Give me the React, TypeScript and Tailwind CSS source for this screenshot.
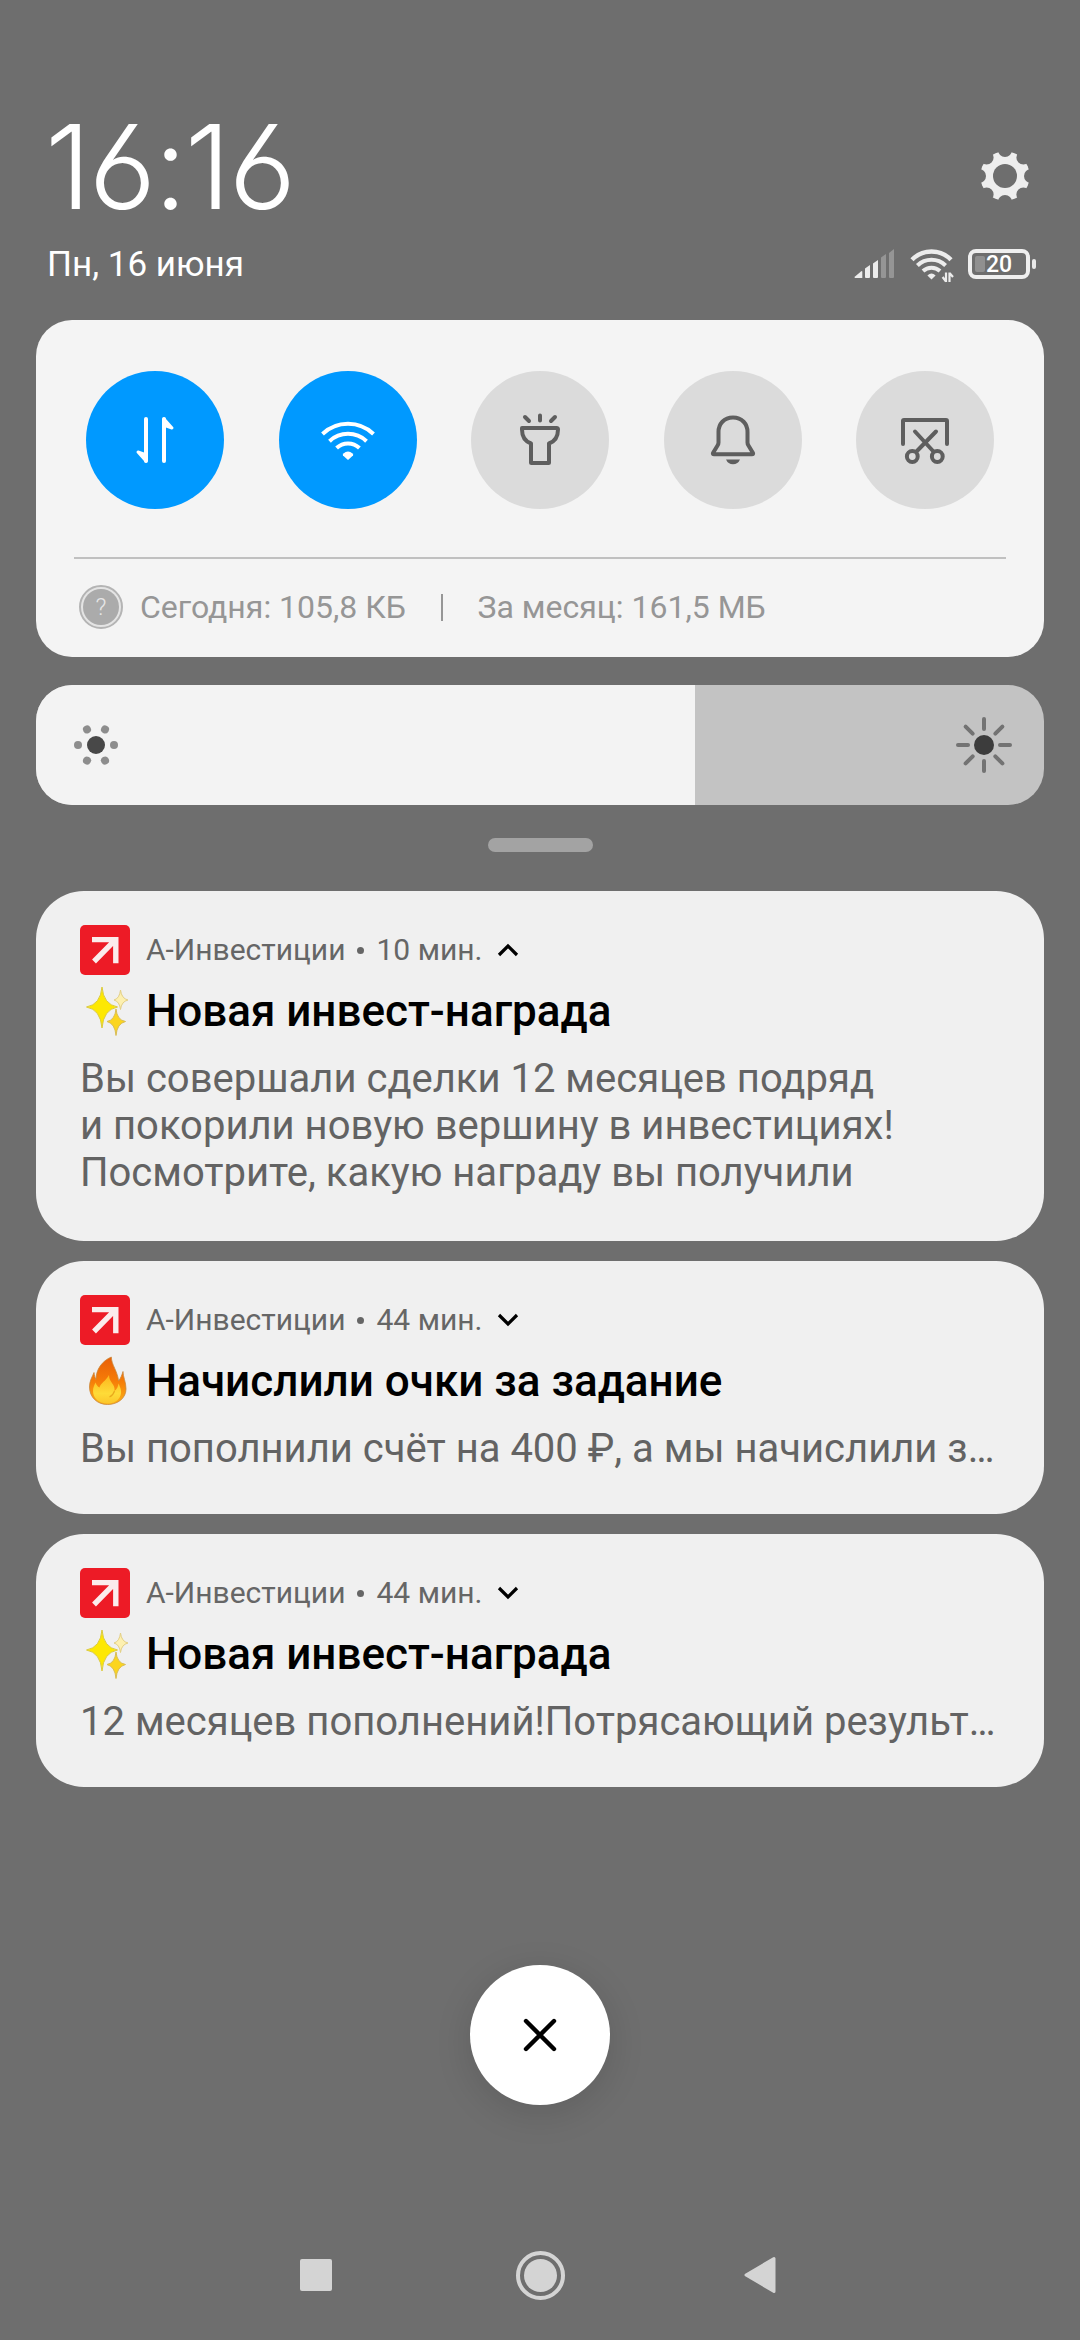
import type { ReactNode } from "react";

function Gear() {
  const dips = [0, 45, 90, 135, 180, 225, 270, 315];
  return (
    <svg className="size-[50px]" viewBox="-25 -25 50 50">
      <mask id="gear">
        <circle r="24.7" fill="#fff" />
        <circle r="12" fill="#000" />
        {dips.map((a) => (
          <circle key={a} cy="-26" r="7" fill="#000" transform={`rotate(${a})`} />
        ))}
      </mask>
      <rect x="-25" y="-25" width="50" height="50" fill="#eeeeee" mask="url(#gear)" />
    </svg>
  );
}

function Signal() {
  return (
    <svg className="h-[30px] w-[42px]" viewBox="0 0 42 30" fill="#ececec">
      <path d="M1 29 Q0 29 1 27.4 L7 22.4 Q8.3 21.6 8.3 23 V29 Z" />
      <path d="M11 19.5 L16 16 V28 Q16 29 15 29 H12 Q11 29 11 28 Z" />
      <path d="M19 14.5 L24 11 V28 Q24 29 23 29 H20 Q19 29 19 28 Z" />
      <path d="M27 8.5 L32 5 V28 Q32 29 31 29 H28 Q27 29 27 28 Z" fill="#959595" />
      <path d="M35 4 L40 0 V28 Q40 29 39 29 H36 Q35 29 35 28 Z" fill="#959595" />
    </svg>
  );
}

function StatusWifi() {
  return (
    <svg className="h-[34px] w-[44px]" viewBox="0 0 44 34" fill="none" stroke="#ececec">
      <path d="M2 10.8 A27 27 0 0 1 41 10.8" strokeWidth="4.4" />
      <path d="M7.4 16.5 A20 20 0 0 1 35.6 16.5" strokeWidth="4" />
      <path d="M13 22 A12.6 12.6 0 0 1 30 22" strokeWidth="4" />
      <path d="M21.5 30.4 L17.4 26.6 Q21.5 22.6 25.6 26.6 Z" fill="#ececec" stroke="none" />
      <path d="M36 33 V23.5 M36 32.6 L32.6 28 M39.5 33 V23.5 M39.5 24 L43 28" strokeWidth="2.2" />
    </svg>
  );
}

function Battery() {
  return (
    <div className="flex items-center gap-[2px]">
      <div className="flex h-[30px] w-[62px] items-center rounded-[8px] border-4 border-[#efefef] pl-[3px]">
        <div className="h-4 w-[10px] rounded-[2px] bg-[#909090]" />
        <span className="ml-px text-[23px] leading-none font-medium text-white">20</span>
      </div>
      <div className="h-[10px] w-1 rounded-[2px] bg-[#e8e8e8]" />
    </div>
  );
}

function DataIcon() {
  return (
    <svg className="size-[60px]" viewBox="0 0 60 60" fill="#fff" stroke="#fff" strokeLinejoin="round" strokeLinecap="round">
      <path d="M21 9 V51" strokeWidth="4" />
      <path d="M21 51 L13 42 L20 44.5 Z" strokeWidth="3" />
      <path d="M39 9 V51" strokeWidth="4" />
      <path d="M39 9 L47 18 L40 15.5 Z" strokeWidth="3" />
    </svg>
  );
}

function WifiIcon() {
  return (
    <svg className="size-[60px]" viewBox="0 0 60 60" fill="none" stroke="#fff" strokeWidth="4">
      <path d="M4.5 24 A37 37 0 0 1 55.5 24" />
      <path d="M11.5 31.2 A27 27 0 0 1 48.5 31.2" />
      <path d="M18.6 38 A16.5 16.5 0 0 1 41.4 38" />
      <path d="M30 50 L25 45.6 Q24.4 44.6 25.4 43.6 Q30 39.6 34.6 43.6 Q35.6 44.6 35 45.6 Z" fill="#fff" stroke="none" />
    </svg>
  );
}

function TorchIcon() {
  return (
    <svg className="size-[60px]" viewBox="0 0 60 60" fill="none" stroke="#5e5e5e" strokeWidth="4" strokeLinecap="round" strokeLinejoin="round">
      <path d="M12 18 H46.5 Q48 18 48 19.5 C48 26.5 44.5 31.5 39 33.5 V52.5 Q39 53 38.5 53 H21.5 Q21 53 21 52.5 V33.5 C15.5 31.5 12 26.5 12 19.5 Z" />
      <path d="M30 5.5 V10.5 M15 7 L19 11 M45 7 L41 11" />
    </svg>
  );
}

function BellIcon() {
  return (
    <svg className="size-[60px]" viewBox="0 0 60 60" fill="none" stroke="#5e5e5e" strokeWidth="4" strokeLinecap="round" strokeLinejoin="round">
      <path d="M30 7.5 C21 7.5 15.5 14 15.5 22 V32.5 Q15.5 34 14.7 35.2 L10 43 Q9.5 44.3 11 44.3 H49 Q50.5 44.3 50 43 L45.3 35.2 Q44.5 34 44.5 32.5 V22 C44.5 14 39 7.5 30 7.5 Z" />
      <path d="M23 49.5 H37 Q35 54.3 30 54.3 Q25 54.3 23 49.5 Z" fill="#5e5e5e" stroke="none" />
    </svg>
  );
}

function ScissorsIcon() {
  return (
    <svg className="size-[60px]" viewBox="0 0 60 60" fill="none" stroke="#5e5e5e" strokeWidth="4" strokeLinecap="round" strokeLinejoin="round">
      <path d="M8 34 V11 Q8 10 9 10 H51 Q52 10 52 11 V34" />
      <path d="M20 21.5 L38 41 M41 21.5 L22 41" />
      <circle cx="17.3" cy="46.5" r="5.4" />
      <circle cx="42.3" cy="46.5" r="5.4" />
    </svg>
  );
}

function HelpIcon() {
  return (
    <div className="flex size-[44px] items-center justify-center rounded-full border-2 border-[#b4b4b4] bg-[#e4e4e4]">
      <div className="flex size-[36px] items-center justify-center rounded-full bg-[#ababab] text-2xl leading-none font-light text-[#e6e6e6]">?</div>
    </div>
  );
}

function DimIcon() {
  return (
    <svg className="size-[46px]" viewBox="-23 -23 46 46" fill="#8d8d8d">
      <circle r="9" fill="#484848" />
      {[0, 60, 120, 180, 240, 300].map((a) => (
        <circle key={a} cx="18" r="4" transform={`rotate(${a})`} />
      ))}
    </svg>
  );
}

function BrightIcon() {
  return (
    <svg className="size-[58px]" viewBox="-29 -29 58 58">
      <circle r="10" fill="#3c3c3c" />
      {[0, 45, 90, 135, 180, 225, 270, 315].map((a) => (
        <path key={a} d="M16 0 H26" stroke="#737373" strokeWidth="4" strokeLinecap="round" transform={`rotate(${a})`} />
      ))}
    </svg>
  );
}

function AppIcon() {
  return (
    <svg className="size-[50px]" viewBox="0 0 50 50">
      <rect width="50" height="50" rx="5" fill="#ed1b26" />
      <path d="M12 14.6 H35.8 V38.3 M14 36.5 L35 15.2" fill="none" stroke="#fbecec" strokeWidth="5.4" />
    </svg>
  );
}

function Sparkles() {
  return (
    <svg className="h-[52px] w-[54px]" viewBox="0 0 54 52" strokeWidth="1">
      <path d="M22 2 Q23.5 19.5 37.5 22 Q23.5 24.5 22 43 Q20.5 24.5 6.5 22 Q20.5 19.5 22 2 Z" fill="#fde803" stroke="#dccb3c" />
      <path d="M36 24 Q37 35 45.5 36.5 Q37 38.5 36 50.5 Q35 38.5 27 36.5 Q35 35 36 24 Z" fill="#fbd51f" stroke="#d9bd55" />
      <path d="M40.5 5 Q41.5 13.5 48 15 Q41.5 16.5 40.5 24.5 Q39.5 16.5 34 15 Q39.5 13.5 40.5 5 Z" fill="#fdf0b0" stroke="#e3cf85" />
    </svg>
  );
}

function Flame() {
  return (
    <svg className="h-[52px] w-[54px]" viewBox="0 0 54 52">
      <defs>
        <linearGradient id="outer" x1="0" y1="0" x2="0" y2="1">
          <stop offset="0" stopColor="#e85f08" />
          <stop offset="0.5" stopColor="#f67c07" />
          <stop offset="1" stopColor="#fbb117" />
        </linearGradient>
        <linearGradient id="inner" x1="0" y1="0" x2="0" y2="1">
          <stop offset="0" stopColor="#fdb51c" />
          <stop offset="0.65" stopColor="#fedb38" />
          <stop offset="1" stopColor="#fcc62b" />
        </linearGradient>
      </defs>
      <path d="M31.3 2 C31.5 10 37.5 16 38.6 26 C40.5 23.5 42 20 43 16.5 C43 22 46 27 46 34 C46 43 38 49.5 27.5 49.5 C17 49.5 9.5 42 9.5 32 C9.5 25.5 12.5 21.5 14 17.5 C14.3 20 14.8 22.5 16 24.5 C16 14.5 22 6 31.3 2 Z" fill="url(#outer)" stroke="#c9873a" strokeWidth="0.8" />
      <path d="M29 20 C29 28 35.5 28.5 34.5 36 C37 34.5 38 31.5 38.5 28.5 C40.5 33 42 36 40.5 40.5 C38.5 46 33.5 48.5 27.5 48.5 C19 48.5 13 43 13 36 C13 32 14.5 30 15.5 27.5 C16.5 30 17.5 31.5 19.5 32.5 C20.5 28 26 26 29 20 Z" fill="url(#inner)" />
      <path d="M34.5 36 C33.5 39.5 31.5 41 29.5 42" fill="none" stroke="#e9a91c" strokeWidth="1.2" />
    </svg>
  );
}

function Tile({ on, children }: { on?: boolean; children: ReactNode }) {
  return (
    <button className={`flex size-[138px] items-center justify-center rounded-full ${on ? "bg-[#0099ff]" : "bg-[#dbdbdb]"}`}>
      {children}
    </button>
  );
}

type Note = { time: string; open?: boolean; icon: ReactNode; title: string; lines: string[] };

const notes: Note[] = [
  {
    time: "10 мин.",
    open: true,
    icon: <Sparkles />,
    title: "Новая инвест-награда",
    lines: ["Вы совершали сделки 12 месяцев подряд", "и покорили новую вершину в инвестициях!", "Посмотрите, какую награду вы получили"],
  },
  { time: "44 мин.", icon: <Flame />, title: "Начислили очки за задание", lines: ["Вы пополнили счёт на 400 ₽, а мы начислили з…"] },
  { time: "44 мин.", icon: <Sparkles />, title: "Новая инвест-награда", lines: ["12 месяцев пополнений!Потрясающий результ…"] },
];

function Card({ note }: { note: Note }) {
  return (
    <article className={`rounded-[48px] bg-[#f0f0f0] px-11 pt-[34px] ${note.open ? "h-[350px]" : "h-[253px]"}`}>
      <header className="flex h-[50px] items-center text-[30px] leading-[34px] text-[#666666]">
        <AppIcon />
        <span className="ml-4">А-Инвестиции</span>
        <span className="mx-3 size-[7px] rounded-full bg-[#666666]" />
        <span>{note.time}</span>
        <svg className="ml-[15px] h-[14px] w-[22px]" viewBox="0 0 22 14" fill="none" stroke="#000" strokeWidth="3.2">
          <path d={note.open ? "M2 12 L11 3 L20 12" : "M2 2 L11 11 L20 2"} />
        </svg>
      </header>
      <h2 className="mt-[10px] flex h-[52px] items-center gap-3 text-[44px] leading-[52px] font-medium text-black">
        {note.icon}
        <span>{note.title}</span>
      </h2>
      <div className="mt-[18px] text-[40px] leading-[47px] whitespace-nowrap text-[#636363]">
        {note.lines.map((l) => (
          <p key={l}>{l}</p>
        ))}
      </div>
    </article>
  );
}

export default function App() {
  return (
    <main className="flex h-[2340px] w-[1080px] flex-col overflow-hidden bg-[#6e6e6e] px-9 font-['Roboto',sans-serif]">
      <div className="flex h-[240px] items-start justify-between pt-[107px] pr-[14px] pl-[9px]">
        <div className="text-[117px] leading-[120px] font-[260] tracking-[-2.2px] text-white font-['Inter',sans-serif] [font-feature-settings:'ss01','cv03']">16:16</div>
        <div className="mt-11"><Gear /></div>
      </div>
      <div className="flex h-20 items-start justify-between pr-[8px] pl-[11px]">
        <div className="mt-[5px] text-[35px] leading-10 text-white">Пн, 16 июня</div>
        <div className="mt-[9px] flex items-start gap-[14px]">
          <Signal />
          <StatusWifi />
          <Battery />
        </div>
      </div>

      <section className="h-[337px] rounded-[36px] bg-[#f4f4f4] px-[38px] pt-[51px]">
        <div className="flex justify-between px-3">
          <Tile on><DataIcon /></Tile>
          <Tile on><WifiIcon /></Tile>
          <Tile><TorchIcon /></Tile>
          <Tile><BellIcon /></Tile>
          <Tile><ScissorsIcon /></Tile>
        </div>
        <div className="mt-12 h-[2px] bg-[#c0c0c0]" />
        <div className="mt-[26px] flex h-11 items-center pl-[5px] text-[32px] leading-[44px] text-[#969696]">
          <HelpIcon />
          <span className="ml-[17px]">Сегодня: 105,8 КБ</span>
          <span className="mr-[34px] ml-[35px] h-[27px] w-[2.5px] bg-[#969696]" />
          <span>За месяц: 161,5 МБ</span>
        </div>
      </section>

      <section className="mt-7 flex h-[120px] items-center overflow-hidden rounded-[36px] bg-[#c3c3c3]">
        <div className="flex h-full w-[659px] items-center bg-[#f3f3f3] pl-[37px]"><DimIcon /></div>
        <div className="flex flex-1 justify-end pr-[31px]"><BrightIcon /></div>
      </section>

      <div className="mt-[33px] h-[14px] w-[105px] self-center rounded-full bg-[#a3a3a3]" />

      <div className="mt-[39px] flex flex-col gap-5">
        {notes.map((n, i) => <Card key={i} note={n} />)}
      </div>

      <button className="mt-[178px] flex size-[140px] shrink-0 items-center justify-center self-center rounded-full bg-white shadow-[0_8px_36px_rgba(0,0,0,0.13)]">
        <svg className="size-[34px]" viewBox="0 0 34 34" stroke="#000" strokeWidth="4.4" strokeLinecap="round">
          <path d="M3 3 L31 31 M31 3 L3 31" />
        </svg>
      </button>

      <nav className="mt-[145px] flex h-[50px] items-center pl-[264px]">
        <div className="size-8 rounded-[2px] bg-[#d4d4d4]" />
        <div className="ml-[184px] flex size-[49px] items-center justify-center rounded-full border-4 border-[#d4d4d4]">
          <div className="size-[33px] rounded-full bg-[#d4d4d4]" />
        </div>
        <svg className="ml-[179px] h-[38px] w-[32px]" viewBox="0 0 32 38" fill="#d4d4d4" stroke="#d4d4d4" strokeWidth="3" strokeLinejoin="round">
          <path d="M2 19 L30 2.5 V35.5 Z" />
        </svg>
      </nav>
    </main>
  );
}
